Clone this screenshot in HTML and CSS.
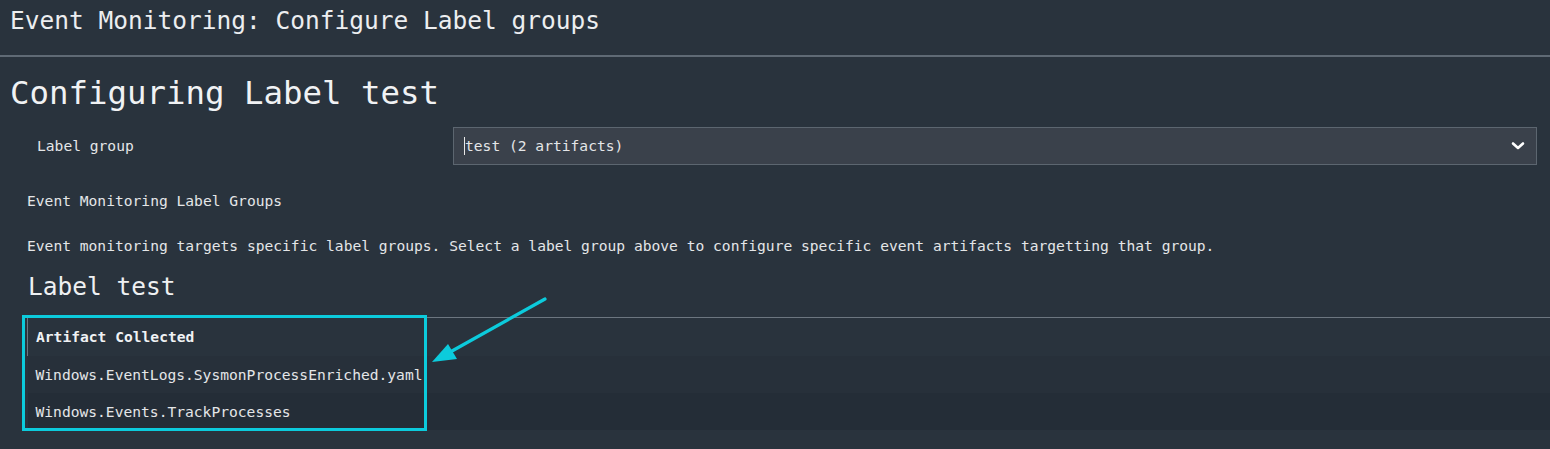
FILE: index.html
```html
<!DOCTYPE html>
<html>
<head>
<meta charset="utf-8">
<link rel="stylesheet" href="styles.css">
</head>
<body>
<div class="page">
  <header class="topbar">
    <div class="topbar-title">Event Monitoring: Configure Label groups</div>
  </header>
  <main class="content">
    <h1 class="heading">Configuring Label test</h1>
    <div class="form-row">
      <label class="form-label">Label group</label>
      <div class="select">
        <span class="caret"></span><span class="select-value">test (2 artifacts)</span>
        <svg class="chevron" width="14" height="10" viewBox="0 0 14 10"><path d="M2 2.5 L7 7 L12 2.5" fill="none" stroke="#ffffff" stroke-width="2.6" stroke-linecap="round" stroke-linejoin="round"/></svg>
      </div>
    </div>
    <div class="section">
      <p class="section-title">Event Monitoring Label Groups</p>
      <p class="section-text">Event monitoring targets specific label groups. Select a label group above to configure specific event artifacts targetting that group.</p>
      <h2 class="subheading">Label test</h2>
    </div>
    <table class="artifacts">
      <thead>
        <tr><th>Artifact Collected</th></tr>
      </thead>
      <tbody>
        <tr class="row-a"><td>Windows.EventLogs.SysmonProcessEnriched.yaml</td></tr>
        <tr class="row-b"><td>Windows.Events.TrackProcesses</td></tr>
      </tbody>
    </table>
  </main>
  <svg class="annotation" width="1550" height="449" viewBox="0 0 1550 449">
    <rect x="23.5" y="316.5" width="402" height="113" fill="none" stroke="#0ccbdc" stroke-width="3"/>
    <line x1="545" y1="299" x2="452" y2="351" stroke="#0ccbdc" stroke-width="3.2" stroke-linecap="round"/>
    <polygon points="432,362 448,344 457,359" fill="#0ccbdc"/>
  </svg>
</div>
</body>
</html>
```
FILE: styles.css
```css
html, body {
  margin: 0;
  padding: 0;
  background: #29333d;
}
body {
  font-family: "DejaVu Sans Mono", "Liberation Mono", monospace;
  color: #e4e6e8;
  font-size: 14.62px;
}
.page {
  position: relative;
  width: 1550px;
  height: 449px;
  overflow: hidden;
  background: #29333d;
}
.topbar {
  height: 55px;
  border-bottom: 2px solid #5f6a75;
  display: flex;
  align-items: flex-start;
  padding-left: 10px;
}
.topbar-title {
  font-size: 24.5px;
  line-height: 30px;
  margin-top: 6px;
  color: #eceef0;
}
.content {
  display: flex;
  flex-direction: column;
}
.heading {
  margin: 16px 0 0 10px;
  font-weight: normal;
  font-size: 32.4px;
  line-height: 40px;
  color: #f0f2f4;
}
.form-row {
  display: flex;
  align-items: center;
  margin-top: 14px;
  padding-left: 37px;
}
.form-label {
  width: 416px;
  line-height: 20px;
}
.select {
  flex: 0 0 1084px;
  border: 1px solid #5c6670;
  background: #3a414b;
  display: flex;
  align-items: center;
  padding-left: 10px;
  box-sizing: border-box;
  height: 38px;
}
.caret {
  width: 1px;
  height: 18px;
  background: #e8e8e8;
}
.select-value {
  flex: 1;
  line-height: 20px;
}
.chevron {
  margin-right: 11px;
}
.section {
  padding-left: 27px;
  display: flex;
  flex-direction: column;
}
.section-title {
  margin: 26px 0 0 0;
  line-height: 20px;
}
.section-text {
  margin: 25px 0 0 0;
  line-height: 20px;
}
.subheading {
  margin: 16px 0 0 1px;
  font-weight: normal;
  font-size: 24.5px;
  line-height: 30px;
  color: #eef0f2;
}
.artifacts {
  margin: 15px 0 0 27px;
  width: 1523px;
  border-collapse: collapse;
  border-top: 1px solid #6c7680;
}
.artifacts th {
  text-align: left;
  font-weight: bold;
  height: 38px;
  padding: 0 0 0 8px;
  border-left: 1px solid #6c7680;
  box-sizing: border-box;
  color: #f0f2f4;
}
.artifacts td {
  height: 37px;
  padding: 0 0 0 8px;
  box-sizing: border-box;
}
.row-a { background: #27303a; }
.row-b { background: #242d37; }
.annotation {
  position: absolute;
  left: 0;
  top: 0;
  pointer-events: none;
}
```
